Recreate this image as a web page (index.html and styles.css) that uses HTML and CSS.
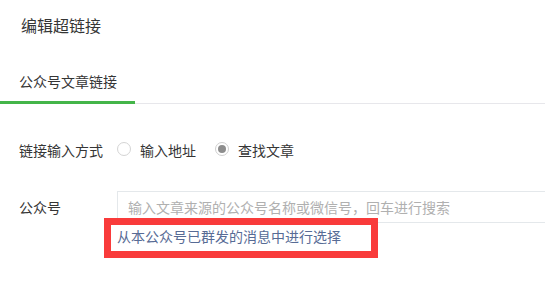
FILE: index.html
```html
<!DOCTYPE html>
<html lang="zh-CN">
<head>
<meta charset="utf-8">
<title>编辑超链接</title>
<link rel="stylesheet" href="styles.css">
</head>
<body>
<div class="dialog">
  <div class="header">编辑超链接</div>
  <div class="tabs">
    <div class="tab active">公众号文章链接</div>
  </div>
  <div class="form">
    <div class="row">
      <div class="label">链接输入方式</div>
      <label class="radio"><span class="circle"></span><span class="radio-text">输入地址</span></label>
      <label class="radio checked"><span class="circle"></span><span class="radio-text">查找文章</span></label>
    </div>
    <div class="row row-input">
      <div class="label">公众号</div>
      <div class="input"><span class="placeholder">输入文章来源的公众号名称或微信号，回车进行搜索</span></div>
    </div>
    <div class="link-row">
      <span class="link">从本公众号已群发的消息中进行选择</span>
    </div>
  </div>
</div>
</body>
</html>
```
FILE: styles.css
```css
html {
  overflow: hidden;
}
body {
  margin: 0;
  padding: 0;
  background: #fff;
  font-family: "Noto Sans CJK SC", "Noto Sans", sans-serif;
  font-size: 14px;
  color: #353535;
}
.dialog {
  width: 545px;
  padding-bottom: 30px;
}
.header {
  padding: 14px 21px 0;
  font-size: 16px;
  line-height: 22px;
}
.tabs {
  margin-top: 34px;
  border-bottom: 1px solid #e7e7eb;
  display: flex;
}
.tab {
  width: 135px;
  box-sizing: border-box;
  padding: 0 0 9px 19px;
  line-height: 22px;
  border-bottom: 3px solid transparent;
  margin-bottom: -1px;
}
.tab.active {
  border-bottom-color: #44b549;
}
.form {
  padding: 35px 0 0 19px;
}
.row {
  display: flex;
  align-items: center;
  line-height: 22px;
}
.label {
  width: 98px;
  flex: none;
}
.radio {
  display: flex;
  align-items: center;
  margin-right: 19px;
}
.circle {
  width: 12px;
  height: 12px;
  border: 1px solid #d4d4d4;
  border-radius: 50%;
  position: relative;
  margin-top: -2px;
  margin-right: 9px;
  flex: none;
}
.radio.checked .circle {
  border-color: #cfcfcf;
}
.radio.checked .circle::after {
  content: "";
  position: absolute;
  left: 2px;
  top: 2px;
  width: 8px;
  height: 8px;
  border-radius: 50%;
  background: #8d8d8d;
}
.row-input {
  margin-top: 30px;
}
.input {
  flex: 1;
  height: 30px;
  border: 1px solid #e4e8eb;
  border-right: none;
  padding-left: 10px;
  line-height: 30px;
  overflow: hidden;
}
.placeholder {
  color: #b0b0b0;
  white-space: nowrap;
}
.link-row {
  padding-left: 98px;
  margin-top: 2px;
  line-height: 22px;
}
.link {
  position: relative;
  color: #576b95;
  display: inline-block;
}
.link::after {
  content: "";
  position: absolute;
  top: -7px;
  left: -13px;
  right: -37px;
  bottom: -11px;
  border: 7px solid #f93b3b;
}
```
